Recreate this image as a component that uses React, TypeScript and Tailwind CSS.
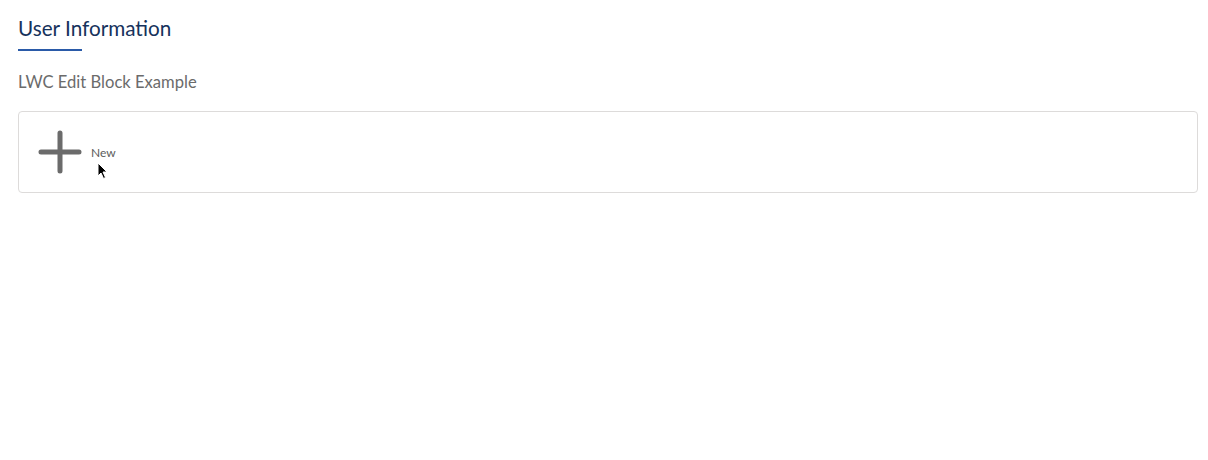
import React from "react";

export default function App() {
  return (
    <div className="relative w-[1208px] h-[460px] bg-white pl-[18px] pr-[10px] pt-[14px]" style={{ fontFamily: '"Lato", "Open Sans", sans-serif' }}>
      <div className="inline-flex flex-col">
        <div className="text-[20.7px] leading-[28px] text-[#16325c] font-normal">User Information</div>
        <div className="mt-[7px] h-[2px] w-[64px] bg-[#2a5aa8]" />
      </div>
      <div className="mt-[21px] text-[16.6px] leading-[20px] text-[#6b6b6b]">LWC Edit Block Example</div>
      <div className="mt-[19px] h-[82px] border border-[#dddbda] rounded-[4px] flex items-center pl-[19px]">
        <svg width="44" height="44" viewBox="0 0 44 44" className="shrink-0">
          <path d="M22 3 V41 M3 22 H41" stroke="#6b6b6b" strokeWidth="5" strokeLinecap="round" />
        </svg>
        <span className="ml-[9px] mt-[2px] text-[12px] text-[#5c5c5c]">New</span>
      </div>
      <svg className="absolute left-[97px] top-[162px]" width="12" height="18" viewBox="0 0 12 18">
        <path d="M1 1 V14 L4 11 L6.5 16.5 L8.5 15.5 L6 10 H10 Z" fill="#000" stroke="#fff" strokeWidth="1" />
      </svg>
    </div>
  );
}
